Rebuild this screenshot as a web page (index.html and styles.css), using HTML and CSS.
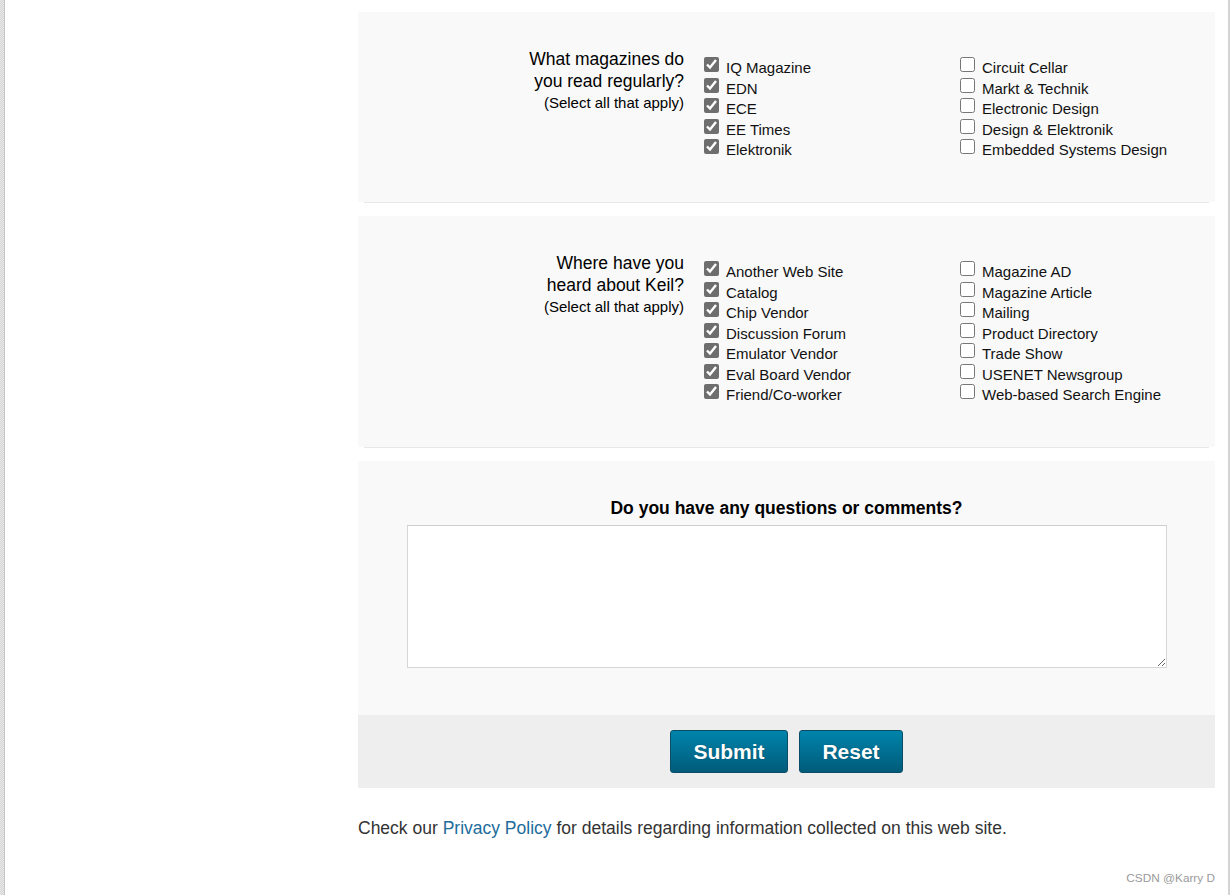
FILE: index.html
```html
<!DOCTYPE html>
<html lang="en">
<head>
<meta charset="utf-8">
<title>Keil Survey</title>
<link rel="stylesheet" href="styles.css">
</head>
<body>
<div class="page">
  <div class="left-strip"></div>
  <div class="main">
    <div class="sep sep-top"></div>
    <div class="q-row">
      <div class="q-label">
        <div class="q-title">What magazines do<br>you read regularly?</div>
        <div class="q-hint">(Select all that apply)</div>
      </div>
      <div class="opts">
        <div class="opt-col">
          <label class="opt"><input type="checkbox" checked><span>IQ Magazine</span></label>
          <label class="opt"><input type="checkbox" checked><span>EDN</span></label>
          <label class="opt"><input type="checkbox" checked><span>ECE</span></label>
          <label class="opt"><input type="checkbox" checked><span>EE Times</span></label>
          <label class="opt"><input type="checkbox" checked><span>Elektronik</span></label>
        </div>
        <div class="opt-col">
          <label class="opt"><input type="checkbox"><span>Circuit Cellar</span></label>
          <label class="opt"><input type="checkbox"><span>Markt &amp; Technik</span></label>
          <label class="opt"><input type="checkbox"><span>Electronic Design</span></label>
          <label class="opt"><input type="checkbox"><span>Design &amp; Elektronik</span></label>
          <label class="opt"><input type="checkbox"><span>Embedded Systems Design</span></label>
        </div>
      </div>
    </div>
    <div class="sep"></div>
    <div class="q-row">
      <div class="q-label">
        <div class="q-title">Where have you<br>heard about Keil?</div>
        <div class="q-hint">(Select all that apply)</div>
      </div>
      <div class="opts">
        <div class="opt-col">
          <label class="opt"><input type="checkbox" checked><span>Another Web Site</span></label>
          <label class="opt"><input type="checkbox" checked><span>Catalog</span></label>
          <label class="opt"><input type="checkbox" checked><span>Chip Vendor</span></label>
          <label class="opt"><input type="checkbox" checked><span>Discussion Forum</span></label>
          <label class="opt"><input type="checkbox" checked><span>Emulator Vendor</span></label>
          <label class="opt"><input type="checkbox" checked><span>Eval Board Vendor</span></label>
          <label class="opt"><input type="checkbox" checked><span>Friend/Co-worker</span></label>
        </div>
        <div class="opt-col">
          <label class="opt"><input type="checkbox"><span>Magazine AD</span></label>
          <label class="opt"><input type="checkbox"><span>Magazine Article</span></label>
          <label class="opt"><input type="checkbox"><span>Mailing</span></label>
          <label class="opt"><input type="checkbox"><span>Product Directory</span></label>
          <label class="opt"><input type="checkbox"><span>Trade Show</span></label>
          <label class="opt"><input type="checkbox"><span>USENET Newsgroup</span></label>
          <label class="opt"><input type="checkbox"><span>Web-based Search Engine</span></label>
        </div>
      </div>
    </div>
    <div class="sep"></div>
    <div class="comments">
      <div class="comments-title">Do you have any questions or comments?</div>
      <textarea class="comments-box"></textarea>
    </div>
    <div class="buttons">
      <button class="btn btn-submit" type="submit">Submit</button>
      <button class="btn btn-reset" type="reset">Reset</button>
    </div>
    <p class="footer">Check our <a href="#">Privacy Policy</a> for details regarding information collected on this web site.</p>
  </div>
  <div class="right-line"></div>
</div>
<div class="watermark">CSDN @Karry D</div>
</body>
</html>
```

FILE: styles.css
```css
html, body {
  margin: 0;
  padding: 0;
  background: #ffffff;
}
body {
  font-family: "Liberation Sans", Arial, sans-serif;
  color: #111111;
  position: relative;
  min-height: 895px;
  overflow: hidden;
}
.page {
  display: flex;
  min-height: 895px;
}
.left-strip {
  flex: none;
  width: 4px;
  border-right: 1px solid #c6c6c6;
  background-color: #e4e4e4;
  background-image: repeating-conic-gradient(#d2d2d2 0% 25%, #ececec 0% 50%);
  background-size: 2px 2px;
}
.main {
  flex: none;
  width: 857px;
  margin-left: 353px;
}
.right-line {
  flex: none;
  width: 2px;
  margin-left: 13px;
  background: #d4d4d4;
}
.sep {
  margin: 0 6px;
  height: 14px;
  box-sizing: border-box;
  background: #ffffff;
  border-top: 1px solid #e8e8e8;
}
.sep-top {
  height: 12px;
  border-top: none;
}
.q-row {
  display: flex;
  align-items: flex-start;
  background: #f9f9f9;
  padding: 37px 0 41.5px;
}
.q-label {
  flex: none;
  width: 326px;
  text-align: right;
  color: #000000;
}
.q-title {
  font-size: 17.5px;
  line-height: 21.5px;
}
.q-hint {
  font-size: 15px;
  line-height: 21.5px;
}
.opts {
  display: flex;
  margin-left: 20px;
  margin-top: 9px;
}
.opt-col {
  width: 256px;
  display: flex;
  flex-direction: column;
}
.opt {
  display: flex;
  align-items: flex-start;
  height: 20.5px;
  font-size: 15px;
  line-height: 20.5px;
  color: #111111;
  white-space: nowrap;
}
.opt input {
  width: 15px;
  height: 15px;
  margin: -1px 7px 0 0;
  accent-color: #6e6e6e;
  flex: none;
}
.comments {
  background: #f9f9f9;
  padding: 36.5px 0 47px;
  display: flex;
  flex-direction: column;
  align-items: center;
}
.comments-title {
  font-size: 17.5px;
  line-height: 21px;
  font-weight: bold;
  color: #000000;
  margin-bottom: 6.5px;
}
.comments-box {
  display: block;
  width: 760px;
  height: 143px;
  box-sizing: border-box;
  margin: 0;
  border: 1px solid #d6d6d6;
  border-top-color: #cfcfcf;
  background: #ffffff;
  font-family: "Liberation Sans", Arial, sans-serif;
  font-size: 15px;
}
.buttons {
  background: #eeeeee;
  padding: 15px 0;
  display: flex;
  justify-content: center;
  gap: 11px;
}
.btn {
  height: 43px;
  box-sizing: border-box;
  border: 1px solid #0b4d66;
  border-radius: 3px;
  background: linear-gradient(#0084ab, #005b7a);
  color: #ffffff;
  font-family: "Liberation Sans", Arial, sans-serif;
  font-size: 21px;
  font-weight: bold;
  padding: 0;
  text-shadow: 0 0 1px rgba(0, 40, 60, 0.6);
  cursor: pointer;
}
.btn-submit {
  width: 118px;
}
.btn-reset {
  width: 104px;
}
.footer {
  margin: 30px 0 0;
  font-size: 17.5px;
  line-height: 20px;
  color: #333333;
}
.footer a {
  color: #1d6c9b;
  text-decoration: none;
}
.watermark {
  position: absolute;
  top: 871px;
  right: 16px;
  font-size: 11.8px;
  line-height: 14px;
  color: #9a9a9a;
}
```
